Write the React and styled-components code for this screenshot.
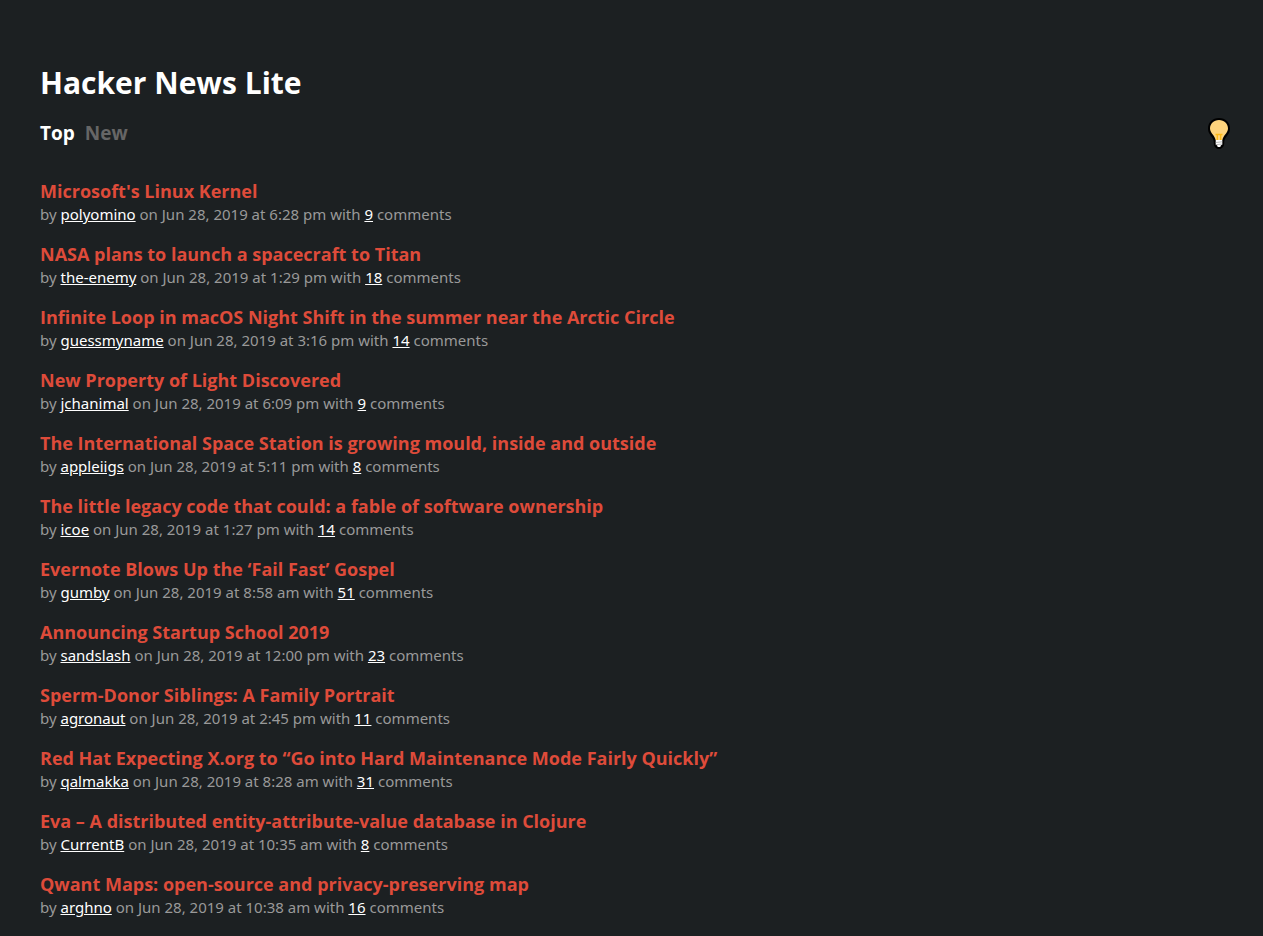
import React, { useState } from "react";
import styled, { createGlobalStyle } from "styled-components";

const GlobalStyle = createGlobalStyle`
  *, *::before, *::after { box-sizing: border-box; }
  html, body, #root { min-height: 100%; }
  body {
    margin: 0;
    background: #1c2022;
    color: #ffffff;
    font-family: "Open Sans", "Noto Sans", sans-serif;
    font-size: 16px;
    line-height: 27px;
  }
  html { background: #1c2022; overflow-x: hidden; scrollbar-width: none; }
`;

const Page = styled.main`
  padding: 60px 32px 16px 40px;
`;

const Title = styled.h1`
  margin: 0;
  font-size: 30px;
  line-height: 46px;
  font-weight: 700;
`;

const Nav = styled.nav`
  display: flex;
  align-items: center;
  justify-content: space-between;
  height: 54px;
`;

const Tabs = styled.div`
  display: flex;
  gap: 10px;
`;

const Tab = styled.a`
  color: ${({ $active }) => ($active ? "#ffffff" : "#666666")};
  font-size: 19px;
  font-weight: 700;
  text-decoration: none;
`;

const ThemeButton = styled.button`
  display: flex;
  padding: 0;
  border: 0;
  background: none;
  cursor: pointer;
`;

const Stories = styled.ul`
  list-style: none;
  margin: 18px 0 0;
  padding: 0;
`;

const Story = styled.li`
  margin-bottom: 16px;
`;

const StoryTitle = styled.a`
  display: block;
  width: fit-content;
  color: #de4b3a;
  font-size: 18px;
  line-height: 26px;
  font-weight: 700;
  text-decoration: none;
`;

const Meta = styled.div`
  color: #999999;
  font-family: "Noto Sans", "Open Sans", sans-serif;
  font-size: 15px;
  line-height: 21px;
`;

const MetaLink = styled.a`
  color: #ffffff;
  text-decoration: underline;
`;

const stories = [
  ["Microsoft's Linux Kernel", "polyomino", "6:28 pm", 9],
  ["NASA plans to launch a spacecraft to Titan", "the-enemy", "1:29 pm", 18],
  ["Infinite Loop in macOS Night Shift in the summer near the Arctic Circle", "guessmyname", "3:16 pm", 14],
  ["New Property of Light Discovered", "jchanimal", "6:09 pm", 9],
  ["The International Space Station is growing mould, inside and outside", "appleiigs", "5:11 pm", 8],
  ["The little legacy code that could: a fable of software ownership", "icoe", "1:27 pm", 14],
  ["Evernote Blows Up the ‘Fail Fast’ Gospel", "gumby", "8:58 am", 51],
  ["Announcing Startup School 2019", "sandslash", "12:00 pm", 23],
  ["Sperm-Donor Siblings: A Family Portrait", "agronaut", "2:45 pm", 11],
  ["Red Hat Expecting X.org to “Go into Hard Maintenance Mode Fairly Quickly”", "qalmakka", "8:28 am", 31],
  ["Eva – A distributed entity-attribute-value database in Clojure", "CurrentB", "10:35 am", 8],
  ["Qwant Maps: open-source and privacy-preserving map", "arghno", "10:38 am", 16],
];

function Bulb() {
  return (
    <svg width="24" height="32" viewBox="0 0 24 32" aria-hidden="true">
      <path d="M12 1C5.500 1 1 5.500 1 11.500c0 4.500 2.500 6.500 4.500 9.500 1 1.500 1.300 3 1.300 5 0 3.500 2 6 5.200 6s5.200-2.500 5.200-6c0-2 .3-3.500 1.300-5 2-3 4.500-5 4.500-9.500C23 5.500 18.500 1 12 1Z" fill="#000" />
      <path d="M12 3c-5.300 0-9 3.700-9 8.500 0 4.500 5 7 5.600 11.500h6.800c.6-4.500 5.600-7 5.600-11.500C21 6.700 17.300 3 12 3Z" fill="#ffd47c" />
      <path d="M8.500 17.500h7M10.300 17.500v5.500M13.700 17.500v5.500" fill="none" stroke="#fdb916" strokeWidth="1.300" />
      <path d="M8.700 23h6.600v4.500l-1.500 1-.5 1.500h-2.600l-.5-1.500-1.500-1Z" fill="#ffffff" />
      <path d="M8.700 25.500l6.600-.7M8.700 27.700l6.600-.7" stroke="#999999" strokeWidth=".7" />
    </svg>
  );
}

export default function App() {
  const [tab, setTab] = useState("Top");
  return (
    <>
      <GlobalStyle />
      <Page>
        <Title>Hacker News Lite</Title>
        <Nav>
          <Tabs>
            {["Top", "New"].map((name) => (
              <Tab key={name} href="#" $active={tab === name} onClick={() => setTab(name)}>{name}</Tab>
            ))}
          </Tabs>
          <ThemeButton type="button" aria-label="Toggle theme"><Bulb /></ThemeButton>
        </Nav>
        <Stories>
          {stories.map(([title, author, time, comments]) => (
            <Story key={title}>
              <StoryTitle href="#">{title}</StoryTitle>
              <Meta>
                by <MetaLink href="#">{author}</MetaLink> on Jun 28, 2019 at {time} with{" "}
                <MetaLink href="#">{comments}</MetaLink> comments
              </Meta>
            </Story>
          ))}
        </Stories>
      </Page>
    </>
  );
}
